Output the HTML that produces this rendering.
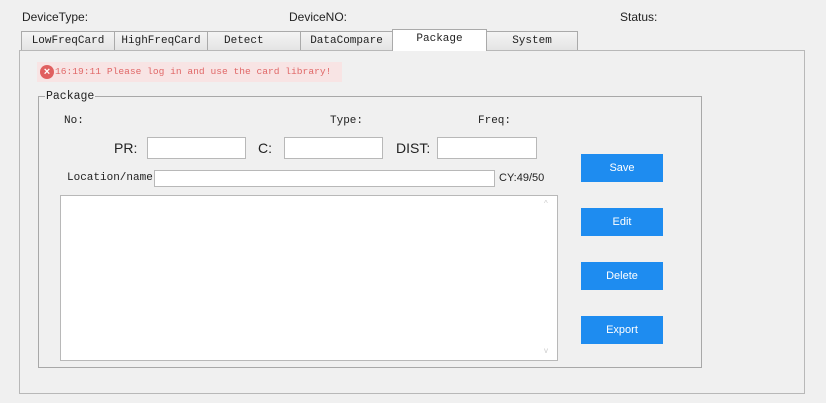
<!DOCTYPE html>
<html><head><style>
body{margin:0;width:826px;height:403px;background:#f0f0f0;position:relative;overflow:hidden;font-family:"Liberation Sans",sans-serif;}
.a{position:absolute;}
.m{font-family:"Liberation Mono",monospace;font-size:11px;color:#222;}
.s{font-size:12px;color:#222;}
.tab{position:absolute;top:31px;height:19px;border:1px solid #aaa;border-bottom:none;background:linear-gradient(#f4f4f4,#e4e4e4);box-sizing:border-box;text-align:center;line-height:18px;font-family:"Liberation Mono",monospace;font-size:11px;color:#222;}
.in{position:absolute;background:#fff;border:1px solid #b8b8b8;box-sizing:border-box;}
.btn{position:absolute;left:581px;width:82px;height:28px;background:#1e8cf0;color:#fff;font-size:11px;text-align:center;line-height:28px;}
</style></head><body>
<div class="a s" style="left:22px;top:10px">DeviceType:</div>
<div class="a s" style="left:289px;top:10px">DeviceNO:</div>
<div class="a s" style="left:620px;top:10px">Status:</div>
<div class="a" style="left:19px;top:50px;width:786px;height:344px;border:1px solid #b8b8b8;box-sizing:border-box"></div>
<div class="tab" style="left:21px;width:94px">LowFreqCard</div>
<div class="tab" style="left:114px;width:94px">HighFreqCard</div>
<div class="tab" style="left:207px;width:94px;text-align:left;padding-left:16px">Detect</div>
<div class="tab" style="left:300px;width:93px">DataCompare</div>
<div class="tab" style="left:392px;top:29px;height:22px;width:95px;background:#fff">Package</div>
<div class="tab" style="left:486px;width:92px">System</div>
<div class="a" style="left:37px;top:62px;width:305px;height:20px;background:#f8e4e4"></div>
<div class="a" style="left:40px;top:65px;width:14px;height:14px;border-radius:50%;background:#e06060;color:#fff;font-size:11px;line-height:14px;text-align:center;font-weight:bold">×</div>
<div class="a m" style="left:55px;top:66px;color:#e06868;font-size:9.6px">16:19:11 Please log in and use the card library!</div>
<div class="a" style="left:38px;top:96px;width:664px;height:272px;border:1px solid #a8a8a8;box-sizing:border-box"></div>
<div class="a m" style="left:45px;top:90px;background:#f0f0f0;padding:0 1px;font-size:11.5px">Package</div>
<div class="a m" style="left:64px;top:115px">No:</div>
<div class="a m" style="left:330px;top:115px">Type:</div>
<div class="a m" style="left:478px;top:115px">Freq:</div>
<div class="a" style="left:114px;top:140px;font-size:14px;color:#222">PR:</div>
<div class="in" style="left:147px;top:137px;width:99px;height:22px"></div>
<div class="a" style="left:258px;top:140px;font-size:14px;color:#222">C:</div>
<div class="in" style="left:284px;top:137px;width:99px;height:22px"></div>
<div class="a" style="left:396px;top:140px;font-size:14px;color:#222">DIST:</div>
<div class="in" style="left:437px;top:137px;width:100px;height:22px"></div>
<div class="a m" style="left:67px;top:172px">Location/name</div>
<div class="in" style="left:154px;top:170px;width:341px;height:17px"></div>
<div class="a s" style="left:499px;top:172px;font-size:11px">CY:49/50</div>
<div class="in" style="left:60px;top:195px;width:498px;height:166px"></div>
<div class="a" style="left:544px;top:199px;color:#ccc;font-size:8px">^</div>
<div class="a" style="left:544px;top:346px;color:#ccc;font-size:8px">v</div>
<div class="btn" style="top:154px">Save</div>
<div class="btn" style="top:208px">Edit</div>
<div class="btn" style="top:262px">Delete</div>
<div class="btn" style="top:316px">Export</div>
</body></html>
